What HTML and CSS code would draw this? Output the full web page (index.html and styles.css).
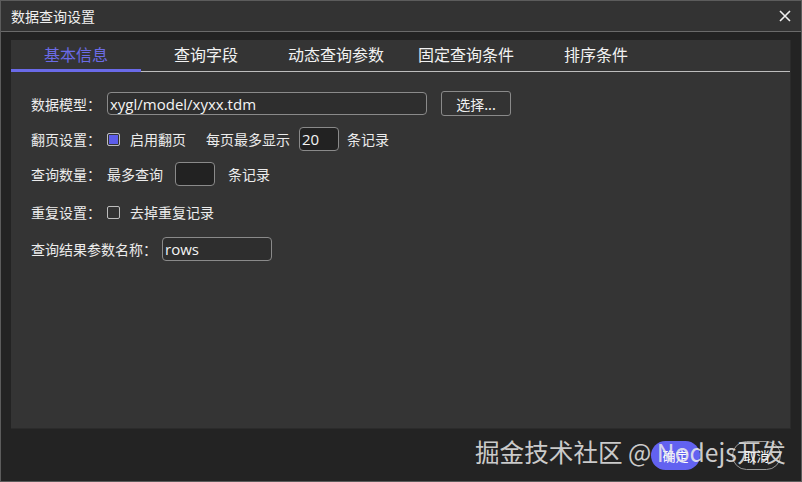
FILE: index.html
```html
<!DOCTYPE html>
<html lang="zh-CN">

<head>
  <meta charset="UTF-8">
  <title>数据查询设置</title>
  <link rel="stylesheet" href="styles.css">
</head>

<body>
  <div class="dialog">
    <div class="titlebar">
      <span class="title">数据查询设置</span>
      <svg class="close" width="12" height="12" viewBox="0 0 12 12">
        <path d="M1 1 L11 11 M11 1 L1 11" stroke="#f0f0f0" stroke-width="1.6" />
      </svg>
    </div>

    <div class="body">
      <div class="panel">
        <div class="tabs">
          <div class="tab active">基本信息</div>
          <div class="tab">查询字段</div>
          <div class="tab">动态查询参数</div>
          <div class="tab">固定查询条件</div>
          <div class="tab">排序条件</div>
        </div>

        <div class="form">
          <div class="row r1">
            <span class="label">数据模型：</span>
            <input class="input model" value="xygl/model/xyxx.tdm">
            <button class="pick">选择...</button>
          </div>

          <div class="row r2">
            <span class="label">翻页设置：</span>
            <span class="check on"></span>
            <span class="text">启用翻页</span>
            <span class="text gap">每页最多显示</span>
            <input class="input small dark" value="20">
            <span class="text">条记录</span>
          </div>

          <div class="row r3">
            <span class="label">查询数量：</span>
            <span class="text">最多查询</span>
            <input class="input small dark" value="">
            <span class="text">条记录</span>
          </div>

          <div class="row r4">
            <span class="label">重复设置：</span>
            <span class="check"></span>
            <span class="text">去掉重复记录</span>
          </div>

          <div class="row r5">
            <span class="label">查询结果参数名称：</span>
            <input class="input rows" value="rows">
          </div>
        </div>
      </div>

      <div class="footer">
        <button class="btn primary">确定</button>
        <button class="btn ghost">取消</button>
      </div>
    </div>

    <div class="watermark">掘金技术社区 @ Nodejs开发</div>
  </div>
</body>

</html>
```

FILE: styles.css
```css
* {
  box-sizing: border-box;
}

html,
body {
  margin: 0;
  width: 802px;
  height: 482px;
  overflow: hidden;
  background: #232323;
}

body {
  font-family: "Noto Sans CJK SC", "Noto Sans", sans-serif;
  color: #f0f0f0;
}

.dialog {
  position: relative;
  width: 802px;
  height: 482px;
  border: 1px solid #5c5c5c;
  display: flex;
  flex-direction: column;
}

.titlebar {
  height: 31px;
  background: #333333;
  border-bottom: 1px solid #6a6a6a;
  display: flex;
  align-items: center;
  justify-content: space-between;
  padding: 0 10px 0 10px;
  flex-shrink: 0;
}

.title {
  font-size: 14px;
}

.close {
  display: block;
}

.body {
  flex: 1;
  display: flex;
  flex-direction: column;
  padding: 8px 10px 0 10px;
  background: #232323;
}

.panel {
  height: 389px;
  background: #343434;
  border-right: 1px solid #2b2b2b;
  border-bottom: 1px solid #2b2b2b;
}

.tabs {
  display: flex;
  height: 32px;
  border-bottom: 1px solid #bdbdbd;
}

.tab {
  width: 130px;
  text-align: center;
  font-size: 16px;
  line-height: 29px;
  color: #f2f2f2;
}

.tab.active {
  color: #6b6be6;
  border-bottom: 3px solid #6a6ae8;
  margin-bottom: -1px;
}

.form {
  padding: 19px 20px 0 20px;
  font-size: 14px;
}

.row {
  display: flex;
  align-items: center;
  color: #ececec;
}

.r1 {
  height: 25px;
}

.r2 {
  height: 24px;
  margin-top: 11px;
}

.r3 {
  height: 24px;
  margin-top: 11px;
}

.r4 {
  height: 24px;
  margin-top: 14px;
}

.r5 {
  height: 24px;
  margin-top: 13px;
}

.label {
  width: 76px;
  flex-shrink: 0;
}

.r5 .label {
  width: auto;
  margin-right: 5px;
}

.input {
  height: 24px;
  border: 1px solid #8a8a8a;
  border-radius: 4px;
  background: #2e2e2e;
  color: #f4f4f4;
  font-family: "Open Sans", "Noto Sans", sans-serif;
  font-size: 15px;
  padding: 0 2px;
  outline: none;
}

.input.dark {
  background: #222222;
}

.model {
  width: 320px;
  height: 23px;
}

.pick {
  margin-left: 14px;
  width: 70px;
  height: 25px;
  background: #333333;
  border: 1px solid #8a8a8a;
  border-radius: 3px;
  color: #f0f0f0;
  font-family: "Noto Sans CJK SC", sans-serif;
  font-size: 14px;
  padding: 0;
}

.small {
  width: 40px;
  margin: 0 10px 0 0;
}

.r2 .small {
  margin-left: 9px;
  margin-right: 8px;
}

.r3 .small {
  margin-left: 12px;
  margin-right: 13px;
}

.rows {
  width: 110px;
}

.check {
  width: 13px;
  height: 13px;
  border: 1px solid #bdbdbd;
  border-radius: 2px;
  background: #333333;
  margin-right: 10px;
}

.check.on {
  background: #5d5dea;
  box-shadow: inset 0 0 0 1px #333333;
}

.gap {
  margin-left: 20px;
}

.footer {
  flex: 1;
  display: flex;
  justify-content: flex-end;
  align-items: center;
  gap: 32px;
  padding: 0 10px 0 0;
}

.btn {
  width: 49px;
  height: 29px;
  border-radius: 15px;
  font-family: "Noto Sans CJK SC", sans-serif;
  font-size: 13px;
  color: #ffffff;
  padding: 0;
}

.primary {
  background: #6262f0;
  border: none;
}

.ghost {
  background: transparent;
  border: 1px solid #9a9a9a;
}

.watermark {
  position: absolute;
  left: 474px;
  top: 432px;
  font-size: 24.6px;
  color: rgba(235, 235, 235, 0.85);
  white-space: nowrap;
  pointer-events: none;
}
```
